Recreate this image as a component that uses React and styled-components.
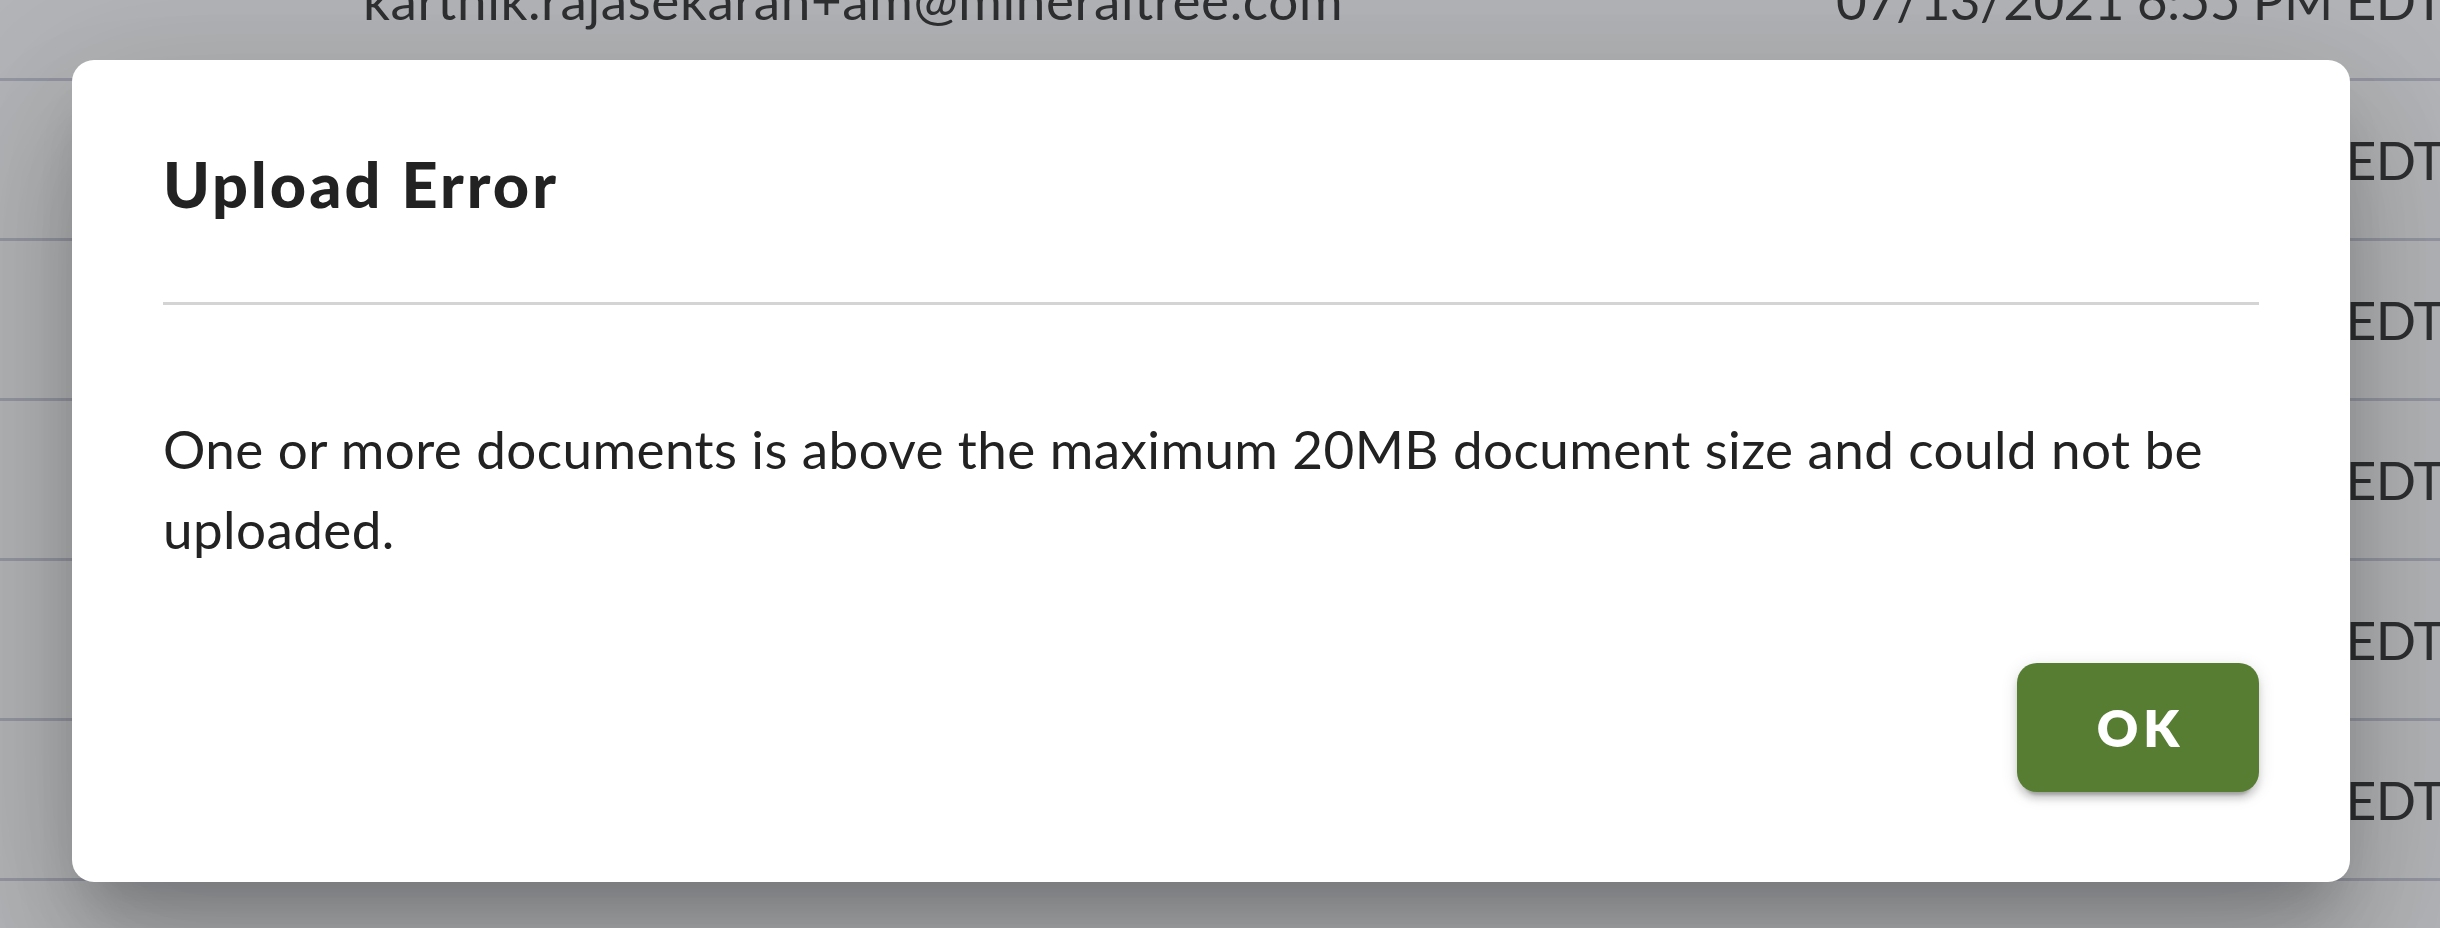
import React from "react";
import styled, { createGlobalStyle } from "styled-components";

const GlobalStyle = createGlobalStyle`
  html, body {
    margin: 0;
    padding: 0;
    background: #ffffff;
    overflow: hidden;
    font-family: "Lato", "Liberation Sans", sans-serif;
  }
  * { box-sizing: border-box; }
`;

const Page = styled.div`
  width: 2440px;
  height: 928px;
  overflow: hidden;
  background: #fdfdfe;
`;

const Table = styled.div`
  margin-top: -79px;
  display: flex;
  flex-direction: column;
`;

const Row = styled.div`
  height: 160px;
  display: grid;
  grid-template-columns: 363px 1473px 1fr;
  align-items: center;
  border-bottom: 3px solid #d0d1de;
  font-size: 53px;
  color: #3c3c3c;
  white-space: nowrap;
`;

const Cell = styled.div`
  grid-column: ${(p) => p.$col};
  letter-spacing: ${(p) => p.$spacing || "0"};
`;

const Backdrop = styled.div`
  position: fixed;
  inset: 0;
  background: rgba(20, 22, 28, 0.31);
  display: flex;
  align-items: flex-start;
  padding: 60px 90px 0 72px;
`;

const Dialog = styled.div`
  flex: 1;
  background: #ffffff;
  border-radius: 22px;
  padding: 87px 91px 90px 91px;
  display: flex;
  flex-direction: column;
  box-shadow: 0 37px 50px -23px rgba(0, 0, 0, 0.2),
    0 80px 127px 10px rgba(0, 0, 0, 0.14),
    0 30px 153px 27px rgba(0, 0, 0, 0.12);
`;

const Title = styled.h2`
  margin: 0;
  font-size: 63px;
  line-height: 74px;
  font-weight: 900;
  letter-spacing: 3px;
  color: #222222;
`;

const Divider = styled.hr`
  margin: 81px 0 0;
  border: 0;
  height: 3px;
  background: #d4d4d4;
`;

const Message = styled.p`
  margin: 104px 0 0;
  font-size: 53px;
  line-height: 80px;
  letter-spacing: 0.42px;
  color: #222222;
`;

const Actions = styled.div`
  display: flex;
  justify-content: flex-end;
  margin-top: 94px;
`;

const OkButton = styled.button`
  width: 242px;
  height: 129px;
  border: 0;
  border-radius: 20px;
  background: #577d32;
  color: #ffffff;
  font-family: inherit;
  font-size: 51px;
  font-weight: 800;
  letter-spacing: 5px;
  padding: 0 0 0 5px;
  cursor: pointer;
  box-shadow: 0 10px 3px -7px rgba(0, 0, 0, 0.2),
    0 7px 7px 0 rgba(0, 0, 0, 0.14), 0 3px 17px 0 rgba(0, 0, 0, 0.12);
`;

const rows = [
  { email: "karthik.rajasekaran+am@mineraltree.com", date: "07/13/2021 6:55 PM EDT" },
  { email: "karthik.rajasekaran+am@mineraltree.com", date: "07/13/2021 6:52 PM EDT" },
  { email: "karthik.rajasekaran+am@mineraltree.com", date: "07/13/2021 6:48 PM EDT" },
  { email: "karthik.rajasekaran+am@mineraltree.com", date: "07/13/2021 6:41 PM EDT" },
  { email: "karthik.rajasekaran+am@mineraltree.com", date: "07/13/2021 6:37 PM EDT" },
  { email: "karthik.rajasekaran+am@mineraltree.com", date: "07/13/2021 6:30 PM EDT" },
  { email: "karthik.rajasekaran+am@mineraltree.com", date: "07/13/2021 6:22 PM EDT" },
];

export default function App() {
  return (
    <>
      <GlobalStyle />
      <Page>
        <Table>
          {rows.map((r, i) => (
            <Row key={i}>
              <Cell $col={2} $spacing="0.6px">{r.email}</Cell>
              <Cell $col={3} $spacing="-0.6px">{r.date}</Cell>
            </Row>
          ))}
        </Table>
      </Page>
      <Backdrop>
        <Dialog role="dialog" aria-labelledby="upload-error-title">
          <Title id="upload-error-title">Upload Error</Title>
          <Divider />
          <Message>
            One or more documents is above the maximum 20MB document size and
            could not be uploaded.
          </Message>
          <Actions>
            <OkButton>OK</OkButton>
          </Actions>
        </Dialog>
      </Backdrop>
    </>
  );
}
